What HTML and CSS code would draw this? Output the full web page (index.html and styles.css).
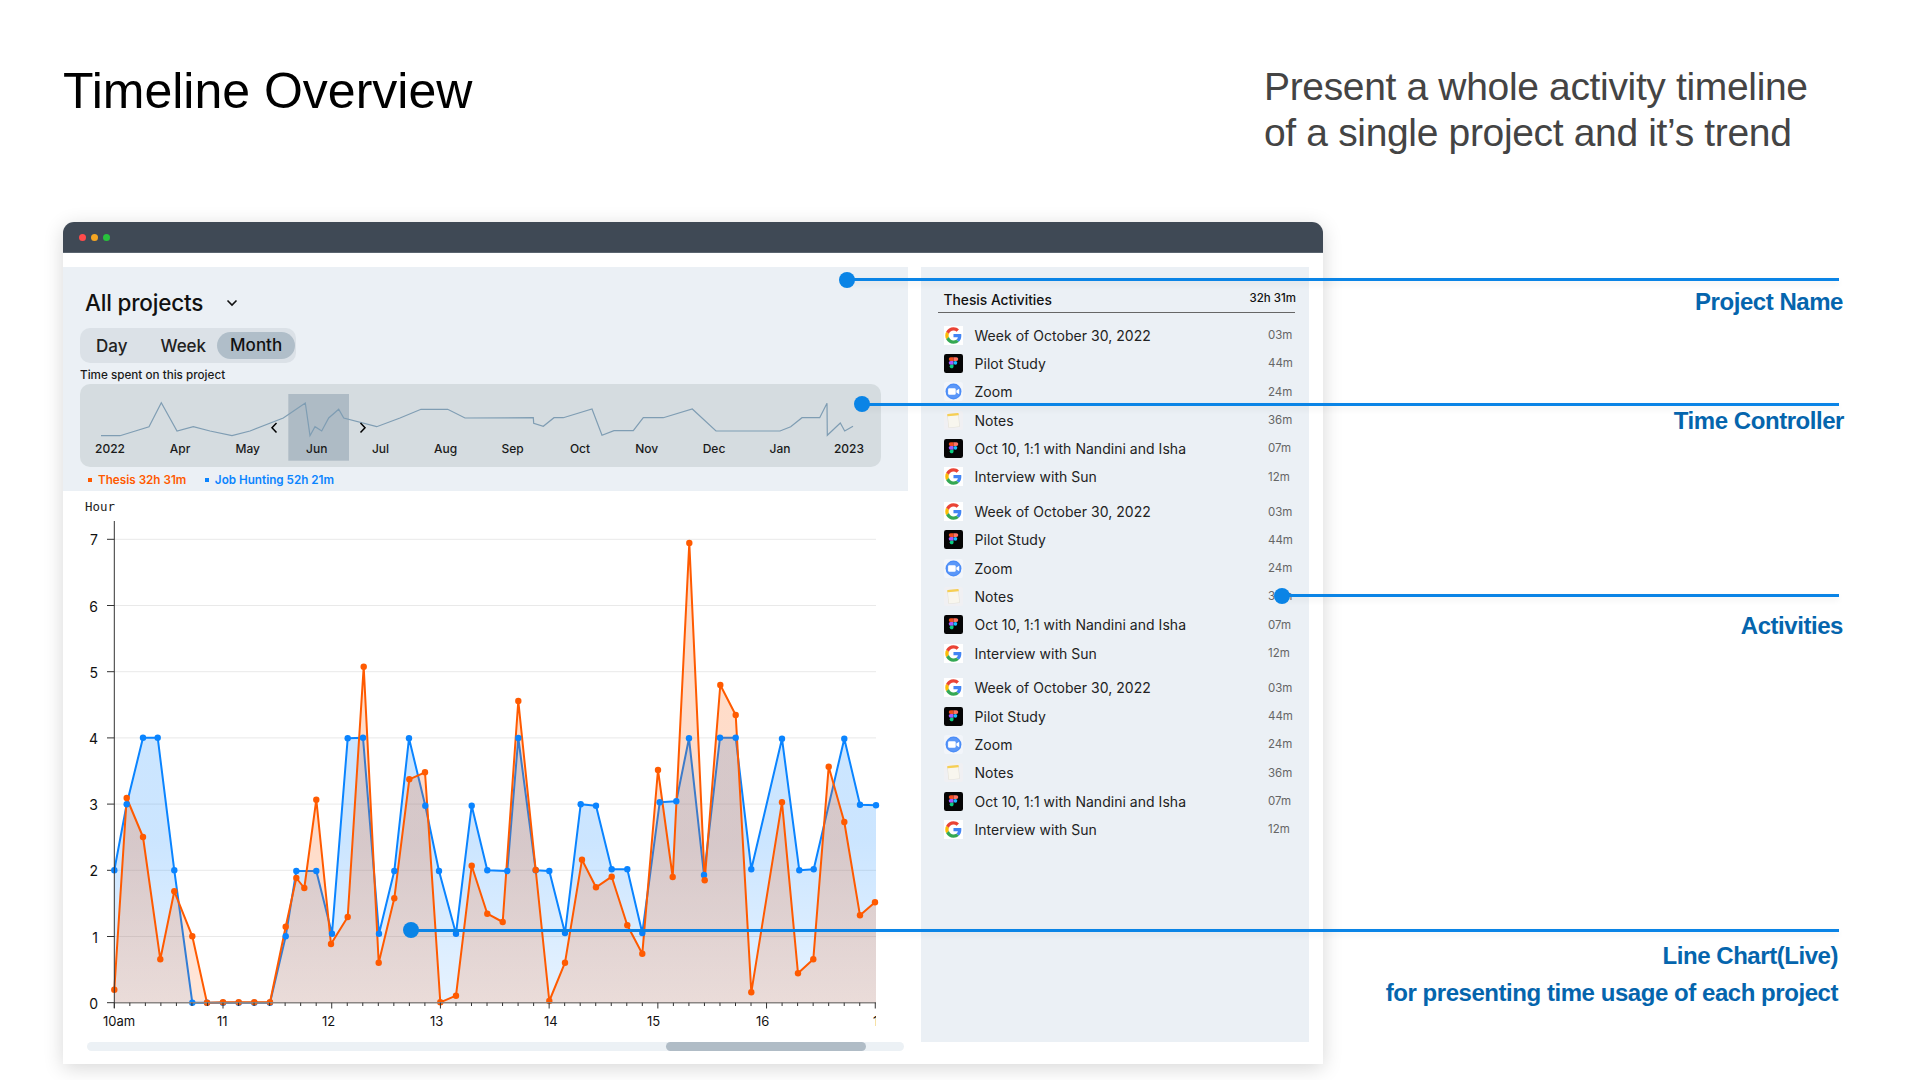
FILE: index.html
```html
<!DOCTYPE html>
<html>
<head>
    <title>Timeline Overview</title>
    <link rel="stylesheet" href="styles.css">
</head>
<body>
    <svg class="icon-defs" width="0" height="0">
        <symbol id="ic-google" viewBox="0 0 60 60">
            <rect width="60" height="60" fill="#fff"/>
            <g transform="translate(4 4) scale(1.08)">
                <path fill="#ea4335" d="M24 9.5c3.54 0 6.71 1.22 9.21 3.6l6.85-6.85C35.9 2.38 30.47 0 24 0 14.62 0 6.51 5.38 2.56 13.22l7.98 6.19C12.43 13.72 17.74 9.5 24 9.5z"/>
                <path fill="#4285f4" d="M46.98 24.55c0-1.57-.15-3.09-.38-4.55H24v9.02h12.94c-.58 2.96-2.26 5.48-4.78 7.18l7.73 6c4.51-4.18 7.09-10.36 7.09-17.65z"/>
                <path fill="#fbbc05" d="M10.53 28.59c-.48-1.45-.76-2.99-.76-4.59s.27-3.14.76-4.59l-7.98-6.19C.92 16.46 0 20.12 0 24c0 3.88.92 7.54 2.56 10.78l7.97-6.19z"/>
                <path fill="#34a853" d="M24 48c6.48 0 11.93-2.13 15.89-5.81l-7.73-6c-2.15 1.45-4.92 2.3-8.16 2.3-6.26 0-11.57-4.22-13.47-9.91l-7.98 6.19C6.51 42.62 14.62 48 24 48z"/>
            </g>
        </symbol>
        <symbol id="ic-figma" viewBox="0 0 60 60">
            <rect width="60" height="60" rx="7" fill="#050505"/>
            <path fill="#f24e1e" d="M21 10h9v12h-9a6 6 0 0 1 0-12z"/>
            <path fill="#ff7262" d="M30 10h9a6 6 0 0 1 0 12h-9z"/>
            <path fill="#a259ff" d="M21 22h9v12h-9a6 6 0 0 1 0-12z"/>
            <circle fill="#1abcfe" cx="36" cy="28" r="6"/>
            <path fill="#0acf83" d="M21 34h9v6a6 6 0 1 1-9-6z"/>
        </symbol>
        <symbol id="ic-zoom" viewBox="0 0 60 60">
            <rect width="60" height="60" rx="8" fill="#f2f5fa"/>
            <circle cx="30" cy="30" r="25" fill="#4a8cf7"/>
            <circle cx="30" cy="30" r="21" fill="#5b97f8"/>
            <rect x="13" y="20" width="24" height="20" rx="4" fill="#fff"/>
            <path fill="#fff" d="M39 27l9-6v18l-9-6z"/>
        </symbol>
        <symbol id="ic-notes" viewBox="0 0 60 60">
            <rect width="60" height="60" rx="8" fill="#f0f0f3"/>
            <g transform="rotate(-5 30 30)">
                <rect x="12" y="8" width="36" height="44" rx="3" fill="#e0ddd2"/>
                <rect x="13.5" y="14" width="33" height="36.5" fill="#f8f6ee"/>
                <rect x="12" y="8" width="36" height="7" rx="2" fill="#f7cf52"/>
            </g>
        </symbol>
    </svg>

    <header class="top">
        <h1 class="title">Timeline Overview</h1>
        <p class="summary">Present a whole activity timeline<br>of a single project and it’s trend</p>
    </header>

    <main class="window">
        <div class="titlebar">
            <span class="light light-red"></span>
            <span class="light light-amber"></span>
            <span class="light light-green"></span>
        </div>
        <div class="window-body">
            <section class="main-col">
                <div class="project-panel">
                    <div class="project-name">
                        <span>All projects</span>
                        <svg class="chevron" width="12" height="8" viewBox="0 0 12 8"><path d="M1.5 1.5L6 6l4.5-4.5"/></svg>
                    </div>
                    <div class="segment">
                        <span class="seg-item seg-day">Day</span>
                        <span class="seg-item seg-week">Week</span>
                        <span class="seg-item seg-active">Month</span>
                    </div>
                    <div class="time-label">Time spent on this project</div>
                    <div class="time-box">
                        <svg class="time-svg" viewBox="80 384 801 83" width="801" height="83">
                            <rect x="288.3" y="394" width="60.7" height="66.7" fill="#aebbc5"/>
                            <polyline class="spark" points="101,435.7 120,435.7 149,426.7 161.3,402.7 177,431 193.3,426.7 210,431 232,435.7 250,431 283.3,418 305.3,403 310,435.7 315,426.7 321.7,431 328.7,418 338.7,409.3 343.7,418 376.7,426.7 400,418 421,409.3 447.7,409.3 465,418 533.3,417.7 533.7,423.3 543.3,426.3 554,417.7 563.3,417.7 592,409 602,435.3 614,430.7 633.3,430.7 643.3,417.7 663.3,417.7 692.3,409 716,431 780,431 790.7,426.7 802,417.7 819.7,417.7 827,403.3 827.3,435.3 840.3,423 844.7,431 853,426.3"/>
                            <path class="nudge" d="M276.5 423l-4.5 4.7 4.5 4.7"/>
                            <path class="nudge" d="M360.5 423l4.5 4.7-4.5 4.7"/>
                            <g class="month">
                                <text x="110" y="453">2022</text>
                                <text x="180" y="453">Apr</text>
                                <text x="247.7" y="453">May</text>
                                <text x="316.7" y="453">Jun</text>
                                <text x="380.5" y="453">Jul</text>
                                <text x="445.7" y="453">Aug</text>
                                <text x="512.5" y="453">Sep</text>
                                <text x="580" y="453">Oct</text>
                                <text x="646.7" y="453">Nov</text>
                                <text x="714" y="453">Dec</text>
                                <text x="780" y="453">Jan</text>
                                <text x="849" y="453">2023</text>
                            </g>
                        </svg>
                    </div>
                    <div class="legend">
                        <span class="legend-item legend-orange">Thesis 32h 31m</span>
                        <span class="legend-item legend-blue">Job Hunting 52h 21m</span>
                    </div>
                </div>

                <svg id="chart" class="chart" viewBox="63 491 845 551" width="845" height="551"></svg>

                <div class="scroll-track"><div class="scroll-thumb"></div></div>
            </section>

            <aside class="activities">
                <div class="act-head">
                    <span class="act-title">Thesis Activities</span>
                    <span class="act-total">32h 31m</span>
                </div>
                <ul class="act-group">
                    <li class="act-row"><svg class="act-icon"><use href="#ic-google"/></svg><span class="act-name">Week of October 30, 2022</span><span class="act-time">03m</span></li>
                    <li class="act-row"><svg class="act-icon"><use href="#ic-figma"/></svg><span class="act-name">Pilot Study</span><span class="act-time">44m</span></li>
                    <li class="act-row"><svg class="act-icon"><use href="#ic-zoom"/></svg><span class="act-name">Zoom</span><span class="act-time">24m</span></li>
                    <li class="act-row"><svg class="act-icon"><use href="#ic-notes"/></svg><span class="act-name">Notes</span><span class="act-time">36m</span></li>
                    <li class="act-row"><svg class="act-icon"><use href="#ic-figma"/></svg><span class="act-name">Oct 10, 1:1 with Nandini and Isha</span><span class="act-time">07m</span></li>
                    <li class="act-row"><svg class="act-icon"><use href="#ic-google"/></svg><span class="act-name">Interview with Sun</span><span class="act-time">12m</span></li>
                </ul>
                <ul class="act-group">
                    <li class="act-row"><svg class="act-icon"><use href="#ic-google"/></svg><span class="act-name">Week of October 30, 2022</span><span class="act-time">03m</span></li>
                    <li class="act-row"><svg class="act-icon"><use href="#ic-figma"/></svg><span class="act-name">Pilot Study</span><span class="act-time">44m</span></li>
                    <li class="act-row"><svg class="act-icon"><use href="#ic-zoom"/></svg><span class="act-name">Zoom</span><span class="act-time">24m</span></li>
                    <li class="act-row"><svg class="act-icon"><use href="#ic-notes"/></svg><span class="act-name">Notes</span><span class="act-time">36m</span></li>
                    <li class="act-row"><svg class="act-icon"><use href="#ic-figma"/></svg><span class="act-name">Oct 10, 1:1 with Nandini and Isha</span><span class="act-time">07m</span></li>
                    <li class="act-row"><svg class="act-icon"><use href="#ic-google"/></svg><span class="act-name">Interview with Sun</span><span class="act-time">12m</span></li>
                </ul>
                <ul class="act-group">
                    <li class="act-row"><svg class="act-icon"><use href="#ic-google"/></svg><span class="act-name">Week of October 30, 2022</span><span class="act-time">03m</span></li>
                    <li class="act-row"><svg class="act-icon"><use href="#ic-figma"/></svg><span class="act-name">Pilot Study</span><span class="act-time">44m</span></li>
                    <li class="act-row"><svg class="act-icon"><use href="#ic-zoom"/></svg><span class="act-name">Zoom</span><span class="act-time">24m</span></li>
                    <li class="act-row"><svg class="act-icon"><use href="#ic-notes"/></svg><span class="act-name">Notes</span><span class="act-time">36m</span></li>
                    <li class="act-row"><svg class="act-icon"><use href="#ic-figma"/></svg><span class="act-name">Oct 10, 1:1 with Nandini and Isha</span><span class="act-time">07m</span></li>
                    <li class="act-row"><svg class="act-icon"><use href="#ic-google"/></svg><span class="act-name">Interview with Sun</span><span class="act-time">12m</span></li>
                </ul>
            </aside>
        </div>
    </main>

    <div class="callout callout-project"><span class="callout-dot"></span><span class="callout-label label-project">Project Name</span></div>
    <div class="callout callout-time"><span class="callout-dot"></span><span class="callout-label label-time">Time Controller</span></div>
    <div class="callout callout-activities"><span class="callout-dot"></span><span class="callout-label label-activities">Activities</span></div>
    <div class="callout callout-live"><span class="callout-dot"></span><span class="callout-label label-live">Line Chart(Live)<br>for presenting time usage of each project</span></div>

    <script>
        // points are in page pixels, the svg viewBox is set up to match
        const blue = [[114.3,870.3],[126.7,804.3],[143,737.7],[157.7,737.7],[174.3,870.3],[192.3,1002.7],[207,1002.7],[223,1002.7],[238.7,1002.7],[254.3,1002.7],[270,1002.7],[285.7,936.3],[296.3,871],[316.3,871],[332,933.7],[347.7,738.3],[363,737.7],[379,933.7],[394.3,871],[409,738.3],[425.3,805.7],[439,871],[456,933.7],[471.7,805.7],[487.3,870.3],[507.3,871],[518.3,738],[535.7,870.3],[549.3,871],[565,933],[580.7,804.3],[596,805.7],[611.7,869.3],[627.3,869.3],[642.3,933],[659.7,802.3],[676.3,801.3],[689,738.3],[704,875],[720,737.7],[735.7,737.7],[751.3,869.3],[782,738.7],[799.3,870.3],[813.7,869.3],[844.3,738.7],[860,804.7],[876,805.3]];
        const orange = [[114.3,989.7],[126.7,798],[143,837],[160.3,959.3],[174.3,891.3],[192.3,936.3],[207,1002.7],[223,1002.3],[238.7,1002.3],[254.3,1002.3],[270,1002.3],[285.7,926.7],[296.3,878],[304.3,888],[316.3,799.7],[331,944],[347.7,917],[363.7,666.7],[378.7,962.7],[394.3,898.3],[409.3,779.3],[425,772.3],[440.3,1002.3],[456,995.7],[471.7,865.7],[487.3,913.7],[502.7,922],[518.3,701],[535.7,870],[549.3,1001],[565,962.7],[582,859.7],[596,887.3],[611.7,876.7],[627.3,925.3],[642.3,953.7],[658,770],[672.7,877],[689.3,543],[704.7,880.3],[720.3,685],[735.7,715],[751.3,992.3],[782,802.3],[798,973.3],[813.3,959.3],[828.7,766.7],[844.3,822],[860,915.3],[875,902.3]];

        const AXIS_X = 114.3, BASE = 1002.7, UNIT = 66.2, END = 876;
        let out = `<defs>
            <linearGradient id="fillBlue" gradientUnits="userSpaceOnUse" x1="0" y1="540" x2="0" y2="1003">
                <stop offset="0" stop-color="#0a84ff" stop-opacity=".21"/><stop offset=".65" stop-color="#0a84ff" stop-opacity=".21"/><stop offset="1" stop-color="#0a84ff" stop-opacity=".1"/>
            </linearGradient>
            <linearGradient id="fillOrange" gradientUnits="userSpaceOnUse" x1="0" y1="540" x2="0" y2="1003">
                <stop offset="0" stop-color="#ff5a00" stop-opacity=".21"/><stop offset=".65" stop-color="#ff5a00" stop-opacity=".21"/><stop offset="1" stop-color="#ff5a00" stop-opacity=".15"/>
            </linearGradient>
            <clipPath id="plotClip"><rect x="63" y="491" width="${END - 63}" height="551"/></clipPath>
        </defs>`;

        out += `<text class="hour" x="85" y="511">Hour</text>`;
        for (let v = 1; v <= 7; v++) {
            const y = BASE - v * UNIT;
            out += `<line class="grid" x1="${AXIS_X}" x2="${END}" y1="${y}" y2="${y}"/>`;
        }
        for (let v = 0; v <= 7; v++) {
            const y = BASE - v * UNIT;
            out += `<line class="axis" x1="107" x2="${AXIS_X}" y1="${y}" y2="${y}"/>`;
            out += `<text class="tick-y" x="98" y="${y + 6}">${v}</text>`;
        }

        const line = pts => pts.map(p => p.join(',')).join(' ');
        const area = pts => `${pts[0][0]},${BASE} ${line(pts)} ${END},${pts[pts.length - 1][1]} ${END},${BASE}`;
        const dots = (pts, cls) => pts.map(p => `<circle class="${cls}" cx="${p[0]}" cy="${p[1]}" r="3.2"/>`).join('');

        out += `<polygon points="${area(blue)}" fill="url(#fillBlue)"/>`;
        out += `<polyline class="line-blue" points="${line(blue)}"/>`;
        out += `<polygon points="${area(orange)}" fill="url(#fillOrange)"/>`;
        out += `<polyline class="line-orange" points="${line(orange)}"/>`;
        out += dots(blue, 'dot-blue') + dots(orange, 'dot-orange');

        // x axis sits above the fills
        out += `<line class="base" x1="${AXIS_X}" x2="${END}" y1="${BASE}" y2="${BASE}"/>`;
        out += `<line class="axis" x1="${AXIS_X}" x2="${AXIS_X}" y1="521" y2="1008"/>`;
        for (let i = 0; i <= 49; i++) {
            const x = AXIS_X + i * 15.53;
            out += `<line class="axis" x1="${x}" x2="${x}" y1="${BASE}" y2="${i % 7 === 0 ? 1008.5 : 1006}"/>`;
        }
        const hours = [['10am',103],['11',217],['12',322],['13',430],['14',544],['15',647],['16',756],['1',873]];
        out += `<g clip-path="url(#plotClip)">` + hours.map(h => `<text class="tick-x" x="${h[1]}" y="1026">${h[0]}</text>`).join('') + `</g>`;

        document.getElementById('chart').innerHTML = out;
    </script>
</body>
</html>
```

FILE: styles.css
```css
* { box-sizing: border-box; }
html, body { margin: 0; padding: 0; }
body { width: 1920px; height: 1080px; position: relative; overflow: hidden; background: #fff; font-family: Inter, "Liberation Sans", sans-serif; color: #111; }
.icon-defs { position: absolute; }

.top { display: flex; justify-content: space-between; height: 222px; padding: 59px 111px 0 63px; font-family: "Liberation Sans", Arial, sans-serif; }
.title { margin: 0; font-size: 50px; line-height: 64px; font-weight: 400; color: #000; }
.summary { margin: 0; width: 545px; white-space: nowrap; font-size: 39px; line-height: 46px; letter-spacing: -.34px; color: #444; position: relative; top: 5px; }

.window { width: 1260px; height: 842px; margin-left: 63px; background: #fff; border-radius: 11px 11px 0 0; box-shadow: 0 4px 20px rgba(0, 0, 0, .16); }
.titlebar { height: 31px; display: flex; align-items: center; gap: 5px; padding-left: 15.5px; background: #3f4955; border-radius: 11px 11px 0 0; border-bottom: 1px solid #5a646f; }
.light { width: 7px; height: 7px; border-radius: 50%; }
.light-red { background: #ff4b4b; }
.light-amber { background: #f5a623; }
.light-green { background: #28c23c; }
.window-body { display: flex; gap: 13px; padding-top: 14px; }

.main-col { width: 845px; }
.project-panel { height: 224px; padding: 20px 27px 0 17px; background: #ebf0f5; }
.project-name { display: flex; align-items: center; gap: 23px; padding-left: 5px; height: 30px; font-size: 22.5px; font-weight: 500; letter-spacing: -.2px; color: #111; }
.chevron { fill: none; stroke: #111; stroke-width: 1.6; position: relative; top: 1px; }
.segment { display: flex; align-items: center; width: 216px; height: 35px; margin-top: 11px; background: #dbe1e7; border-radius: 10px; font-size: 17px; font-weight: 500; }
.seg-item { color: #222; }
.seg-day { margin-left: 16px; }
.seg-week { margin-left: 33px; }
.seg-active { margin-left: 11px; padding: 0 13px 0 13px; height: 27px; line-height: 27px; background: #b0bec9; border-radius: 14px; color: #111; }
.time-label { margin-top: 4px; height: 17px; font-size: 11.7px; line-height: 16px; font-weight: 500; color: #1a1a1a; }
.time-box { width: 801px; height: 83px; background: #d5dce0; border-radius: 10px; }
.time-svg { display: block; }
.spark { fill: none; stroke: #7f9db3; stroke-width: 1.2; }
.nudge { fill: none; stroke: #000; stroke-width: 1.5; }
.month text { font-size: 12px; font-weight: 500; fill: #1a1a1a; text-anchor: middle; }
.legend { display: flex; gap: 18.5px; height: 26px; align-items: center; padding-left: 8px; font-size: 11.7px; font-weight: 600; }
.legend-item::before { content: ""; display: inline-block; width: 4px; height: 4px; margin-right: 6px; vertical-align: 2px; background: currentColor; }
.legend-orange { color: #ff5a00; }
.legend-blue { color: #0a84ff; }

.chart { display: block; }
.grid { stroke: #e9e9e9; stroke-width: 1; }
.axis { stroke: #333; stroke-width: 1; }
.base { stroke: #8a8583; stroke-width: 1.6; }
.hour { font-family: "DejaVu Sans Mono", monospace; font-size: 12.4px; fill: #222; }
.tick-y { font-size: 14px; fill: #111; text-anchor: end; }
.tick-x { font-size: 13px; fill: #111; }
.line-blue, .line-orange { fill: none; stroke-width: 2; stroke-linejoin: round; }
.line-blue { stroke: #0a84ff; }
.line-orange { stroke: #ff5a00; }
.dot-blue { fill: #0a84ff; }
.dot-orange { fill: #ff5a00; }

.scroll-track { width: 817px; height: 9px; margin-left: 24px; background: #ecf1f5; border-radius: 5px; }
.scroll-thumb { width: 200px; height: 9px; margin-left: 579px; background: #b0bcc6; border-radius: 5px; }

.activities { width: 388px; height: 775px; padding: 0 14px 0 17px; background: #ebf0f5; }
.act-head { display: flex; justify-content: space-between; height: 46px; padding: 23px 0 0 5.5px; border-bottom: 1.5px solid #666; }
.act-title { font-size: 13.8px; line-height: 20px; font-weight: 500; color: #111; }
.act-total { font-size: 11.5px; line-height: 18px; font-weight: 500; color: #111; position: relative; left: 1px; top: -1px; }
.act-group { list-style: none; margin: 0 0 6.6px; padding: 0; }
.act-group:first-of-type { margin-top: 8px; }
.act-row { display: flex; align-items: center; height: 28.3px; padding-left: 6px; }
.act-icon { width: 19px; height: 19px; flex: none; }
.act-name { flex: 1; margin-left: 11.5px; font-size: 14px; letter-spacing: .03px; color: #222; }
.act-time { width: 27px; font-size: 11.5px; color: #666; }

.callout { position: absolute; right: 81px; height: 3px; background: #0a84e6; box-shadow: 0 3px 6px rgba(0, 0, 0, .07); }
.callout-project { left: 847px; top: 278px; }
.callout-time { left: 862px; top: 402.5px; }
.callout-activities { left: 1282px; top: 594px; }
.callout-live { left: 411px; top: 928.5px; }
.callout-dot { position: absolute; left: -8px; top: -6.5px; width: 16px; height: 16px; border-radius: 50%; background: #0a84e6; }
.callout-label { position: absolute; white-space: nowrap; text-align: right; font-family: "Liberation Sans", Arial, sans-serif; font-size: 24px; font-weight: 700; letter-spacing: -.45px; line-height: 37px; color: #0565ad; }
.label-project { right: -4px; top: 5px; }
.label-time { right: -5px; top: -1px; }
.label-activities { right: -4px; top: 13px; }
.label-live { right: 1px; top: 8px; }
```
